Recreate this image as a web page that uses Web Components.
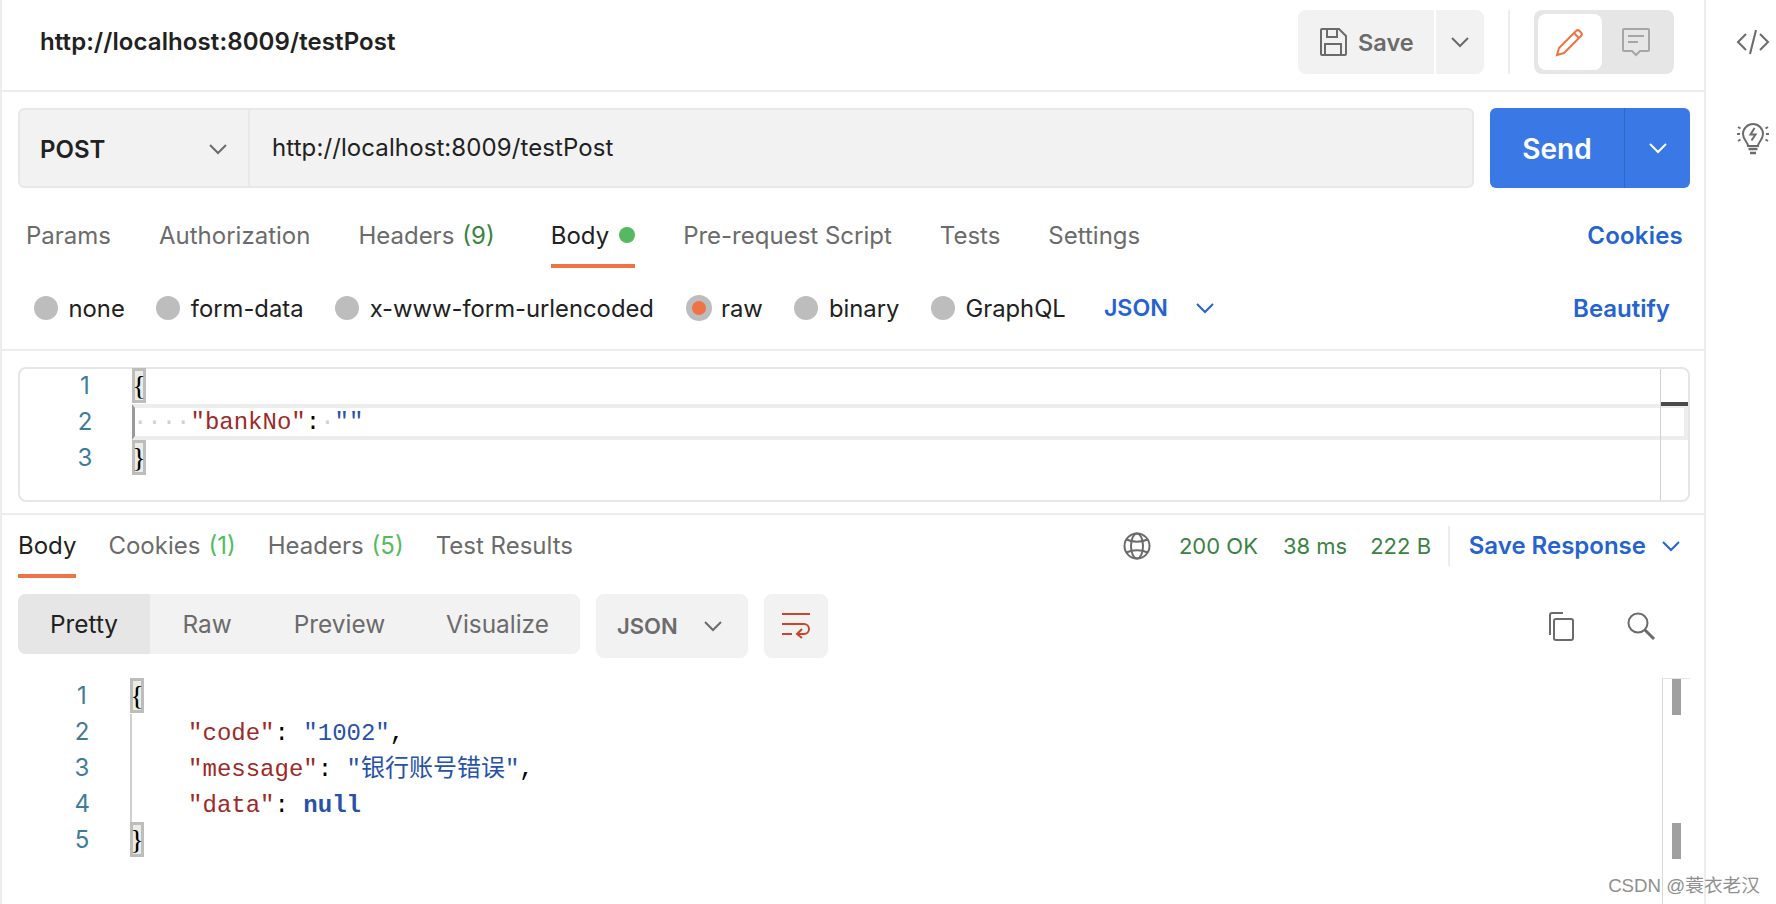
<!doctype html>
<html>
<head>
<meta charset="utf-8">
<style>
    html, body { margin: 0; height: 904px; overflow: hidden; background: #fff; }
    body { font-family: Inter, "Liberation Sans", sans-serif; }
</style>
</head>
<body>
<pm-app>
    <req-header></req-header>
    <url-bar></url-bar>
    <req-tabs></req-tabs>
    <body-options></body-options>
    <code-editor>
        <code-line n="1"><brace-mark>{</brace-mark></code-line>
        <code-line n="2" active><span class="ws">····</span><span class="k">"bankNo"</span><span class="p">:</span><span class="ws">·</span><span class="s">""</span></code-line>
        <code-line n="3"><brace-mark>}</brace-mark></code-line>
    </code-editor>
    <resp-bar></resp-bar>
    <resp-toolbar></resp-toolbar>
    <code-view>
        <code-line n="1"><brace-mark>{</brace-mark></code-line>
        <code-line n="2" guide>    <span class="k">"code"</span><span class="p">: </span><span class="s">"1002"</span><span class="p">,</span></code-line>
        <code-line n="3" guide>    <span class="k">"message"</span><span class="p">: </span><span class="s">"银行账号错误"</span><span class="p">,</span></code-line>
        <code-line n="4" guide>    <span class="k">"data"</span><span class="p">: </span><span class="n">null</span></code-line>
        <code-line n="5"><brace-mark>}</brace-mark></code-line>
    </code-view>
</pm-app>
<water-mark>CSDN @蓑衣老汉</water-mark>

<script>
const ICONS = {
    chevron: '<polyline points="1,1 9,9 17,1"/>',
    save: '<path d="M3 1h17l7 7v18a1 1 0 0 1-1 1H3a1 1 0 0 1-1-1V2a1 1 0 0 1 1-1z"/><path d="M8 1v8h10V1"/><path d="M6 27V16h16v11"/>',
    pencil: '<path d="M1 27l2-7L20 3a2.5 2.5 0 0 1 3.5 0L25 4.500a2.500 2.500 0 0 1 0 3.500L8 25z"/><path d="M18 5l5 5"/>',
    comment: '<path d="M2 1h24a1 1 0 0 1 1 1v20a1 1 0 0 1-1 1h-8l-4 4-4-4H2a1 1 0 0 1-1-1V2a1 1 0 0 1 1-1z"/><path d="M6 8h16M6 14h10"/>',
    code: '<polyline points="9,5 1,13 9,21"/><line x1="19" y1="1" x2="13" y2="25"/><polyline points="23,5 31,13 23,21"/>',
    bulb: '<path d="M11 24c0-4-5-6-5-12a10 10 0 0 1 20 0c0 6-5 8-5 12z"/><path d="M17.500 6l-4 6.500h5l-4 6"/><path d="M11.500 27h9M13 31h6" stroke-width="2.500"/><path d="M0 12h3M1 5l2.500 1.500M1 19l2.500-1.500M29 12h3M31 5l-2.500 1.500M31 19l-2.500-1.500"/>',
    globe: '<circle cx="14" cy="14" r="12.500"/><ellipse cx="14" cy="14" rx="6" ry="12.500"/><path d="M3.500 7.500c6 3 15 3 21 0M3.500 20.500c6-3 15-3 21 0"/>',
    copy: '<path d="M4 23V3a2 2 0 0 1 2-2h11"/><rect x="8" y="7" width="19" height="21" rx="2"/>',
    search: '<circle cx="11" cy="11" r="9.500"/><path d="M18 18l9 9" stroke-width="3"/>',
    wrap: '<path d="M0 2h28M0 12h22a4.500 4.500 0 0 1 0 10h-7M20 17l-5 5 5 4M0 22h10"/>'
};

class PmIcon extends HTMLElement {
    connectedCallback() {
        const w = this.getAttribute('w') || 28;
        const h = this.getAttribute('h') || 28;
        const root = this.attachShadow({ mode: 'open' });
        root.innerHTML = `
            <style>
                :host { display: inline-flex; flex: none; width: ${w}px; height: ${h}px; color: #6b6b6b; }
                svg { display: block; overflow: visible; fill: none; stroke: currentColor; stroke-width: 2; }
            </style>
            <svg width="${w}" height="${h}" viewBox="0 0 ${w} ${h}">${ICONS[this.getAttribute('name')]}</svg>`;
    }
}
customElements.define('pm-icon', PmIcon);

class PmTab extends HTMLElement {
    constructor() {
        super();
        this.attachShadow({ mode: 'open' }).innerHTML = `
            <style>
                :host { display: inline-flex; align-items: center; height: 100%; color: #6b6b6b; white-space: nowrap; box-sizing: border-box; border-bottom: 4px solid transparent; }
                :host([active]) { color: #212121; border-bottom-color: #f07346; }
            </style>
            <slot></slot>`;
    }
}
customElements.define('pm-tab', PmTab);

class PmCount extends HTMLElement {
    constructor() {
        super();
        this.attachShadow({ mode: 'open' }).innerHTML = `
            <style>
                :host { display: inline; margin-left: 8px; color: var(--count-color, #3b8243); }
            </style>
            <slot></slot>`;
    }
}
customElements.define('pm-count', PmCount);

class PmRadio extends HTMLElement {
    constructor() {
        super();
        this.attachShadow({ mode: 'open' }).innerHTML = `
            <style>
                :host { display: inline-flex; align-items: center; gap: 10.500px; font-size: 23.800px; color: #212121; white-space: nowrap; }
                i { display: flex; align-items: center; justify-content: center; width: 24px; height: 24px; border-radius: 50%; background: #bdbdbd; }
                :host([checked]) i { width: 26px; height: 26px; margin-right: -1px; }
                :host([checked]) i::after { content: ""; width: 14px; height: 14px; border-radius: 50%; background: #f07346; }
            </style>
            <i></i><slot></slot>`;
    }
}
customElements.define('pm-radio', PmRadio);

class PmApp extends HTMLElement {
    constructor() {
        super();
        this.attachShadow({ mode: 'open' }).innerHTML = `
            <style>
                :host { display: flex; width: 1776px; height: 904px; font: 400 24px Inter, "Liberation Sans", sans-serif; color: #212121; }
                main { width: 1702px; flex: none; border-left: 2px solid #ededed; border-right: 2px solid #ededed; }
                aside { flex: 1; display: flex; flex-direction: column; align-items: center; padding-top: 29px; gap: 67px; color: #6b6b6b; padding-left: 23px; }
            </style>
            <main><slot></slot></main>
            <aside>
                <pm-icon name="code" w="32" h="26"></pm-icon>
                <pm-icon name="bulb" w="32" h="33"></pm-icon>
            </aside>`;
    }
}
customElements.define('pm-app', PmApp);

class ReqHeader extends HTMLElement {
    constructor() {
        super();
        this.attachShadow({ mode: 'open' }).innerHTML = `
            <style>
                :host { display: flex; align-items: center; height: 90px; box-sizing: content-box; border-bottom: 2px solid #ededed; padding: 0 30px 0 38px; }
                h1 { flex: 1; margin: -7px 0 0; font: 600 24px Inter, sans-serif; letter-spacing: 0.1px; color: #212121; }
                .btn { display: flex; align-items: center; height: 64px; background: #f2f2f2; box-sizing: border-box; margin-top: -6px; }
                .save { width: 136px; padding-left: 21px; gap: 11px; border-radius: 8px 0 0 8px; font-weight: 600; font-size: 23.500px; color: #6b6b6b; }
                .more { width: 48px; margin-left: 2px; justify-content: center; border-radius: 0 8px 8px 0; }
                .sep { width: 2px; height: 64px; margin: -6px 24px 0 24px; background: #ededed; }
                .toggle { display: flex; align-items: center; width: 140px; height: 64px; margin-top: -6px; padding: 4px; box-sizing: border-box; border-radius: 8px; background: #e6e6e6; }
                .on { display: flex; align-items: center; justify-content: center; width: 64px; height: 56px; border-radius: 8px; background: #fff; color: #f07346; }
                .off { flex: 1; display: flex; justify-content: center; color: #a6a6a6; }
                pm-icon.orange { color: #f07346; }
                pm-icon.pale { color: #a6a6a6; }
            </style>
            <h1>http://localhost:8009/testPost</h1>
            <div class="btn save"><pm-icon name="save"></pm-icon>Save</div>
            <div class="btn more"><pm-icon name="chevron" w="18" h="10"></pm-icon></div>
            <div class="sep"></div>
            <div class="toggle">
                <div class="on"><pm-icon class="orange" name="pencil"></pm-icon></div>
                <div class="off"><pm-icon class="pale" name="comment"></pm-icon></div>
            </div>`;
    }
}
customElements.define('req-header', ReqHeader);

class UrlBar extends HTMLElement {
    constructor() {
        super();
        this.attachShadow({ mode: 'open' }).innerHTML = `
            <style>
                :host { display: flex; gap: 16px; height: 80px; padding: 16px 14px 0 16px; }
                .box { flex: 1; display: flex; align-items: center; box-sizing: border-box; background: #f2f2f2; border: 2px solid #e8e8e8; border-radius: 6px; }
                .method { display: flex; align-items: center; justify-content: space-between; width: 230px; height: 100%; box-sizing: border-box; padding: 2px 21px 0 20px; border-right: 2px solid #e8e8e8; font-weight: 600; font-size: 24px; color: #212121; }
                .url { padding: 0 0 2px 22px; font-size: 24px; letter-spacing: 0.1px; color: #212121; }
                .send { display: flex; width: 200px; background: #3a79e5; color: #fff; border-radius: 6px; }
                .label { display: flex; align-items: center; justify-content: center; width: 135px; padding-top: 2px; font-weight: 600; font-size: 28px; border-right: 1px solid #2f68c8; box-sizing: border-box; }
                .drop { flex: 1; display: flex; align-items: center; justify-content: center; }
                pm-icon.white { color: #fff; }
            </style>
            <div class="box">
                <div class="method">POST<pm-icon name="chevron" w="18" h="10"></pm-icon></div>
                <div class="url">http://localhost:8009/testPost</div>
            </div>
            <div class="send">
                <div class="label">Send</div>
                <div class="drop"><pm-icon class="white" name="chevron" w="18" h="10"></pm-icon></div>
            </div>`;
    }
}
customElements.define('url-bar', UrlBar);

class ReqTabs extends HTMLElement {
    constructor() {
        super();
        this.attachShadow({ mode: 'open' }).innerHTML = `
            <style>
                :host { display: flex; height: 80px; padding: 0 21px 0 24px; gap: 48px; align-items: flex-end; }
                pm-tab { height: 60px; padding-bottom: 2px; }
                .dot { width: 16px; height: 16px; margin-left: 10px; border-radius: 50%; background: #55b95f; }
                .wide { margin-right: 8px; }
                .link { margin-left: auto; align-self: flex-end; height: 60px; display: flex; align-items: center; box-sizing: border-box; padding-bottom: 6px; font-weight: 600; letter-spacing: 0.2px; color: #2563d0; }
            </style>
            <pm-tab>Params</pm-tab>
            <pm-tab>Authorization</pm-tab>
            <pm-tab class="wide">Headers<pm-count>(9)</pm-count></pm-tab>
            <pm-tab active>Body<span class="dot"></span></pm-tab>
            <pm-tab>Pre-request Script</pm-tab>
            <pm-tab>Tests</pm-tab>
            <pm-tab>Settings</pm-tab>
            <div class="link">Cookies</div>`;
    }
}
customElements.define('req-tabs', ReqTabs);

class BodyOptions extends HTMLElement {
    constructor() {
        super();
        this.attachShadow({ mode: 'open' }).innerHTML = `
            <style>
                :host { display: flex; align-items: center; height: 80px; padding: 0 34px 1px 32px; gap: 31.600px; border-bottom: 2px solid #ededed; box-sizing: content-box; }
                .json { display: flex; align-items: center; gap: 28px; margin-left: 6.500px; font-weight: 600; font-size: 23.200px; color: #2563d0; }
                .beautify { margin-left: auto; font-weight: 600; color: #2563d0; }
                pm-icon.blue { color: #2563d0; }
            </style>
            <pm-radio>none</pm-radio>
            <pm-radio>form-data</pm-radio>
            <pm-radio>x-www-form-urlencoded</pm-radio>
            <pm-radio checked>raw</pm-radio>
            <pm-radio>binary</pm-radio>
            <pm-radio>GraphQL</pm-radio>
            <div class="json">JSON<pm-icon class="blue" name="chevron" w="18" h="10"></pm-icon></div>
            <div class="beautify">Beautify</div>`;
    }
}
customElements.define('body-options', BodyOptions);

class BraceMark extends HTMLElement {
    constructor() {
        super();
        this.attachShadow({ mode: 'open' }).innerHTML = `
            <style>
                :host { display: inline-flex; align-items: center; justify-content: center; width: 14px; height: 35px; box-sizing: border-box; border: 3px solid #bdbdbd; background: #eaede6; color: #000; font: 28px/28px "Liberation Serif", serif; overflow: visible; }
            </style>
            <slot></slot>`;
    }
}
customElements.define('brace-mark', BraceMark);

class CodeLine extends HTMLElement {
    constructor() {
        super();
        this.attachShadow({ mode: 'open' }).innerHTML = `
            <style>
                :host { display: flex; height: 36px; font: 400 24px/36px "Liberation Mono", "Noto Sans CJK SC", monospace; color: #000; white-space: pre; }
                .no { flex: none; box-sizing: border-box; width: var(--gutter); padding-right: var(--no-pad); text-align: right; font-family: Inter, sans-serif; font-size: 24px; color: #3f7c98; }
                .no span { display: inline-block; width: 15px; text-align: center; }
                .text { flex: 1; min-width: 0; box-sizing: border-box; }
                :host([guide]) .text { border-left: 2px solid #cfcfcf; padding-left: 1px; line-height: 40px; text-indent: -2.500px; }
                :host([active]) .text { border: 4px solid #ededed; border-left: 3px solid #9a9a9a; line-height: 30px; padding-left: 0.4px; text-indent: -2.500px; }
                ::slotted(.k) { color: #9c2a28; }
                ::slotted(.s) { color: #2752a8; }
                ::slotted(.n) { color: #2752a8; font-weight: 700; }
                ::slotted(.p) { color: #000; }
                ::slotted(.ws) { color: #d0d0d0; }
            </style>
            <div class="no"><span>${this.getAttribute('n')}</span></div>
            <div class="text"><slot></slot></div>`;
    }
}
customElements.define('code-line', CodeLine);

class CodeEditor extends HTMLElement {
    constructor() {
        super();
        this.attachShadow({ mode: 'open' }).innerHTML = `
            <style>
                :host { display: block; position: relative; box-sizing: border-box; height: 135px; margin: 16px 14px 11px 16px; border: 2px solid #e6e6e6; border-radius: 8px; --gutter: 112px; --no-pad: 39.500px; }
                .lines { margin: -1px 0 0 0; }
                .mini { position: absolute; left: 1640px; top: 0; bottom: 0; right: 0; border-left: 1px solid #d0d0d0; }
                .mini::after { content: ""; position: absolute; left: 0; right: 0; top: 33px; height: 4px; background: #4a4a4a; }
            </style>
            <div class="lines"><slot></slot></div>
            <div class="mini"></div>`;
    }
}
customElements.define('code-editor', CodeEditor);

class RespBar extends HTMLElement {
    constructor() {
        super();
        this.attachShadow({ mode: 'open' }).innerHTML = `
            <style>
                :host { display: flex; height: 63px; padding: 0 24px 0 16px; border-top: 2px solid #ededed; align-items: flex-end; gap: 32px; --count-color: #55bb60; }
                pm-tab { height: 63px; padding-top: 2px; }
                .status { margin-left: auto; height: 61px; align-self: flex-start; display: flex; align-items: center; gap: 25px; font-size: 22px; color: #3b8243; white-space: nowrap; }
                .globe { margin-right: 3px; }
                .size { margin-left: -2px; }
                .sep { width: 2px; height: 40px; margin-left: -8.300px; background: #ededed; }
                .save { margin-left: -6px; font-weight: 600; font-size: 24px; color: #2563d0; }
                pm-icon.blue { color: #2563d0; margin-left: -9px; }
            </style>
            <pm-tab active>Body</pm-tab>
            <pm-tab>Cookies<pm-count>(1)</pm-count></pm-tab>
            <pm-tab>Headers<pm-count>(5)</pm-count></pm-tab>
            <pm-tab>Test Results</pm-tab>
            <div class="status">
                <pm-icon class="globe" name="globe"></pm-icon>
                <span>200 OK</span><span>38 ms</span><span class="size">222 B</span>
                <div class="sep"></div>
                <span class="save">Save Response</span>
                <pm-icon class="blue" name="chevron" w="18" h="10"></pm-icon>
            </div>`;
    }
}
customElements.define('resp-bar', RespBar);

class RespToolbar extends HTMLElement {
    constructor() {
        super();
        this.attachShadow({ mode: 'open' }).innerHTML = `
            <style>
                :host { display: flex; align-items: flex-start; height: 64px; margin-top: 16px; padding: 0 49px 0 16px; color: #6b6b6b; }
                .seg { display: flex; height: 60px; width: 562px; border-radius: 8px; overflow: hidden; background: #f2f2f2; font-size: 24.400px; }
                .seg span { display: flex; align-items: center; justify-content: center; }
                .seg .on { width: 132px; background: #e6e6e6; color: #212121; }
                .seg .raw { width: 114px; }
                .seg .pre { width: 151px; }
                .seg .vis { flex: 1; }
                .json { display: flex; align-items: center; justify-content: space-between; box-sizing: border-box; width: 152px; height: 64px; margin-left: 16px; padding: 0 26.500px 0 21px; border-radius: 8px; background: #f2f2f2; font-weight: 600; font-size: 22px; }
                .wrap { display: flex; align-items: center; justify-content: center; width: 64px; height: 64px; margin-left: 16px; border-radius: 8px; background: #f2f2f2; }
                .tools { margin-left: auto; display: flex; gap: 53px; padding-top: 18px; }
                pm-icon.red { color: #c8462a; }
            </style>
            <div class="seg"><span class="on">Pretty</span><span class="raw">Raw</span><span class="pre">Preview</span><span class="vis">Visualize</span></div>
            <div class="json">JSON<pm-icon name="chevron" w="18" h="10"></pm-icon></div>
            <div class="wrap"><pm-icon class="red" name="wrap"></pm-icon></div>
            <div class="tools"><pm-icon name="copy"></pm-icon><pm-icon name="search"></pm-icon></div>`;
    }
}
customElements.define('resp-toolbar', RespToolbar);

class CodeView extends HTMLElement {
    constructor() {
        super();
        this.attachShadow({ mode: 'open' }).innerHTML = `
            <style>
                :host { display: block; position: relative; height: 226px; margin-top: 20px; --gutter: 128px; --no-pad: 40.500px; }
                .track { position: absolute; left: 1660px; top: 0; bottom: 0; width: 28px; box-sizing: border-box; border-left: 1px solid #d8d8d8; border-top: 1px solid #e6e6e6; }
                .thumb { position: absolute; left: 9px; width: 9px; height: 36px; background: #a0a0a0; }
            </style>
            <slot></slot>
            <div class="track">
                <div class="thumb" style="top: 0"></div>
                <div class="thumb" style="top: 144px"></div>
            </div>`;
    }
}
customElements.define('code-view', CodeView);

class WaterMark extends HTMLElement {
    constructor() {
        super();
        this.attachShadow({ mode: 'open' }).innerHTML = `
            <style>
                :host { position: absolute; right: 16px; bottom: 7px; font: 18.700px "Liberation Sans", "Noto Sans CJK SC", sans-serif; color: #8f8f8f; text-shadow: 0 0 2px #fff; white-space: nowrap; }
            </style>
            <slot></slot>`;
    }
}
customElements.define('water-mark', WaterMark);
</script>
</body>
</html>
